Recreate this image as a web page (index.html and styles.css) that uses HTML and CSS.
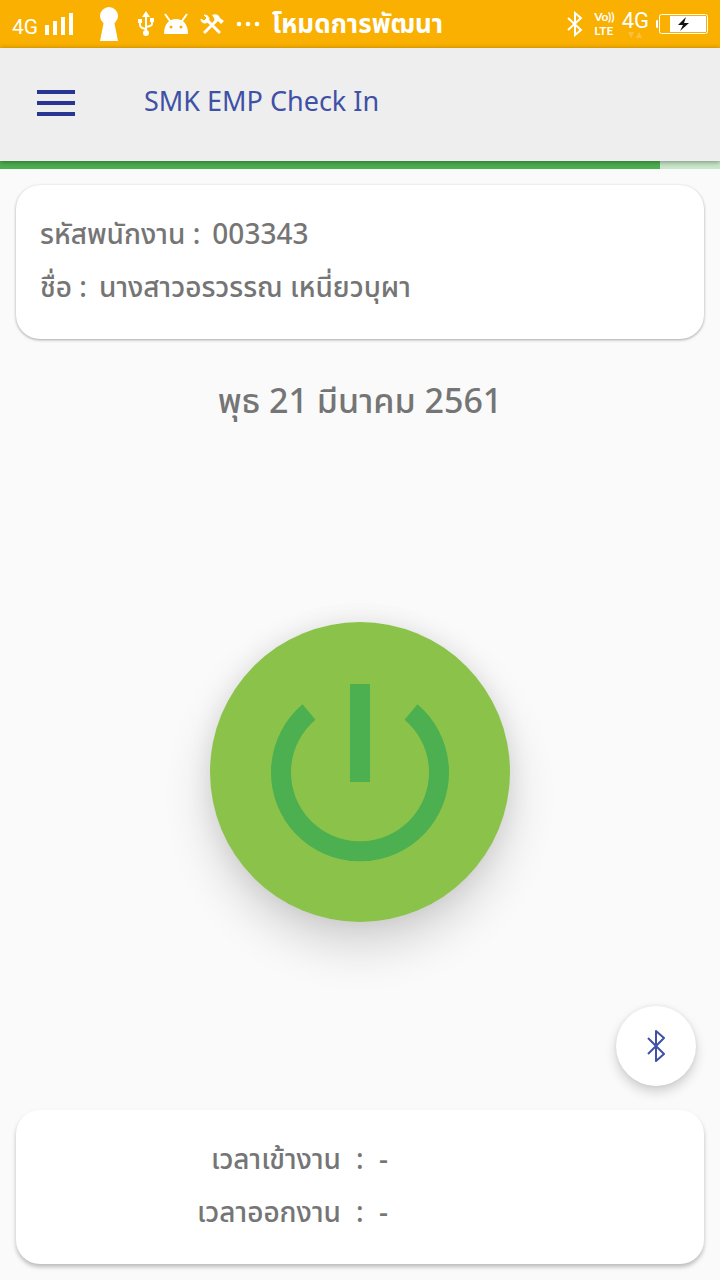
FILE: index.html
```
<!DOCTYPE html>
<html lang="th">
<head>
    <meta charset="UTF-8">
    <meta name="viewport" content="width=device-width, initial-scale=1.0">
    <title>SMK EMP Check In</title>
    <link rel="stylesheet" href="styles.css">
</head>
<body>

<div class="status-bar">
    <span class="network">4G</span>
    <svg class="signal" width="30" height="24" viewBox="0 0 30 24" fill="#fff">
        <path d="M0 13h4v10H0zM8 9h4v14H8zM16 5h4v18h-4zM24 1h4v22h-4z"/>
    </svg>
    <svg class="keyhole" width="20" height="34" viewBox="0 0 20 34" fill="#fff">
        <circle cx="10" cy="9" r="9"/>
        <path d="M5 14h10l4 20H1z"/>
    </svg>
    <svg class="usb" width="16" height="26" viewBox="0 0 16 26" fill="none" stroke="#fff" stroke-width="2">
        <path d="M8 4v18M2 10v4q0 3 6 4M14 9v4q0 2-6 3"/>
        <path d="M8 0l4 6H4zM0 8h4v4H0zM12 7h4v4h-4z" fill="#fff" stroke="none"/>
        <circle cx="8" cy="22" r="3" fill="#fff" stroke="none"/>
    </svg>
    <svg class="android" width="24" height="22" viewBox="0 0 24 22">
        <path d="M6 8L1 1M18 8l5-7" stroke="#fff" stroke-width="2"/>
        <path d="M0 21C0 11 5 6 12 6s12 5 12 15z" fill="#fff"/>
        <circle cx="7" cy="14" r="1.5" fill="#f9b000"/>
        <circle cx="17" cy="14" r="1.5" fill="#f9b000"/>
    </svg>
    <svg class="tools" width="24" height="22" viewBox="0 0 24 22" fill="none" stroke="#fff">
        <path d="M6 6l14 14" stroke-width="3"/>
        <path d="M4 2l3 3-3 3-3-2c0 4 4 5 7 3 2-3 1-7-4-7z" fill="#fff" stroke-width="1"/>
        <path d="M4 20L17 7" stroke-width="3"/>
        <path d="M12 2c4-2 7 0 8 3l4 3-3 3-3-3-3 1-1-4z" fill="#fff" stroke="none"/>
    </svg>
    <svg class="dots" width="24" height="6" viewBox="0 0 24 6" fill="#fff">
        <circle cx="3" cy="3" r="2.3"/><circle cx="12" cy="3" r="2.3"/><circle cx="21" cy="3" r="2.3"/>
    </svg>
    <span class="mode">โหมดการพัฒนา</span>

    <div class="status-right">
        <svg width="16" height="26" viewBox="0 0 16 26" fill="none" stroke="#fff" stroke-width="2">
            <path d="M1 7l13 12-6 5V2l6 5L1 19"/>
        </svg>
        <span class="volte"><span>Vo))</span><span>LTE</span></span>
        <span class="network-data">
            <span>4G</span>
            <svg width="14" height="6" viewBox="0 0 14 6" fill="#fbc040"><path d="M0 0h6L3 6zM8 6h6l-3-6z"/></svg>
        </span>
        <svg class="battery" width="52" height="22" viewBox="0 0 52 22">
            <rect x="0" y="7" width="2" height="8" rx="1" fill="#fff"/>
            <rect x="3.5" y="1.5" width="48" height="19" rx="2" fill="none" stroke="#fff"/>
            <rect x="14" y="3" width="36" height="16" fill="#fff"/>
            <path d="M30 4l-8 8h5l-3 6 9-8h-5z" fill="#111"/>
        </svg>
    </div>
</div>

<header class="toolbar">
    <button class="menu-button" type="button" aria-label="เมนู">
        <svg width="38" height="28" viewBox="0 0 38 28" fill="#283593">
            <path d="M0 1h38v4H0zM0 12h38v4H0zM0 23h38v4H0z"/>
        </svg>
    </button>
    <h1>SMK EMP Check In</h1>
</header>
<progress class="progress" value="660" max="720" aria-label="สถานะ"></progress>

<main>
    <section class="card">
        <p class="info"><span>รหัสพนักงาน :</span> <span>003343</span></p>
        <p class="info"><span>ชื่อ :</span> <span>นางสาวอรวรรณ เหนี่ยวบุผา</span></p>
    </section>

    <h2 class="date">พุธ 21 มีนาคม 2561</h2>

    <div class="action-area">
        <button class="power-button" type="button" aria-label="ลงเวลา">
            <svg width="180" height="180" viewBox="0 0 180 180" fill="none" stroke="#4caf50" stroke-width="20">
                <path d="M90 2v98"/>
                <path d="M39 30A79 79 0 1 0 141 30"/>
            </svg>
        </button>
        <button class="bluetooth-button" type="button" aria-label="บลูทูธ">
            <svg width="20" height="32" viewBox="0 0 20 32" fill="none" stroke="#3f51a5" stroke-width="2" stroke-linejoin="round">
                <path d="M2 8l16 16-8 7V1l8 7L2 24"/>
            </svg>
        </button>
    </div>

    <section class="card card-raised">
        <dl class="times">
            <dt>เวลาเข้างาน</dt>
            <dd>:</dd>
            <dd>-</dd>
            <dt>เวลาออกงาน</dt>
            <dd>:</dd>
            <dd>-</dd>
        </dl>
    </section>
</main>

</body>
</html>
```
FILE: styles.css
```
* {
    box-sizing: border-box;
}
body {
    display: flex;
    flex-direction: column;
    min-height: 100vh;
    margin: 0;
    background-color: #fafafa;
    color: #757575;
    font-family: "Noto Sans", "Noto Sans Thai", sans-serif;
}
h1, h2, p, dl, dd {
    margin: 0;
    font-weight: normal;
}
button {
    display: flex;
    align-items: center;
    justify-content: center;
    padding: 0;
    border: none;
    cursor: pointer;
}
svg {
    flex-shrink: 0;
}

/* status bar */
.status-bar {
    display: flex;
    align-items: center;
    height: 48px;
    padding: 0 12px;
    background-color: #f9b000;
    color: white;
    white-space: nowrap;
}
.network {
    padding-top: 6px;
    font: 21px Roboto, sans-serif;
}
.signal {
    margin-left: 7px;
}
.keyhole {
    margin-left: 24px;
}
.usb {
    margin-left: 19px;
}
.android {
    margin-left: 10px;
}
.tools {
    margin-left: 12px;
}
.dots {
    margin-left: 12px;
}
.mode {
    margin-left: 12px;
    padding-top: 2px;
    font-size: 26px;
    font-weight: bold;
}
.status-right {
    display: flex;
    align-items: center;
    gap: 7px;
    margin-left: auto;
}
.volte {
    display: flex;
    flex-direction: column;
    margin-left: 4px;
    font: bold 12px/14px Lato, sans-serif;
}
.network-data {
    display: flex;
    flex-direction: column;
    align-items: center;
    font: 22px/22px Roboto, sans-serif;
}

/* toolbar */
.toolbar {
    position: relative;
    display: flex;
    align-items: center;
    gap: 50px;
    height: 113px;
    padding: 0 18px 4px;
    background-color: #eeeeee;
    box-shadow: 0 1px 5px rgba(0, 0, 0, 0.4);
}
.menu-button {
    width: 76px;
    height: 76px;
    background: none;
}
.toolbar h1 {
    padding-bottom: 4px;
    color: #3f51a5;
    font-size: 27px;
}
.progress {
    display: block;
    width: 100%;
    height: 8px;
    border: none;
    background-color: #c8e6c9;
    appearance: none;
}
.progress::-webkit-progress-bar {
    background-color: #c8e6c9;
}
.progress::-webkit-progress-value {
    background-color: #4caf50;
}

/* content */
main {
    display: flex;
    flex: 1;
    flex-direction: column;
    padding: 16px;
}
.card {
    padding: 22px 24px 26px;
    border-radius: 24px;
    background-color: white;
    box-shadow: 0 1px 3px rgba(0, 0, 0, 0.35);
    font-size: 28px;
    line-height: 53px;
}
.card p, .card dl, .card dd, .date {
    font-weight: 500;
}
.card-raised {
    box-shadow: 0 3px 4px rgba(0, 0, 0, 0.25);
}
.info {
    display: flex;
    gap: 12px;
}
.date {
    padding: 34px 0 30px;
    font-size: 34px;
    line-height: 54px;
    text-align: center;
}
.action-area {
    position: relative;
    display: flex;
    flex: 1;
    align-items: center;
    justify-content: center;
    margin-bottom: 24px;
}
.power-button {
    width: 300px;
    height: 300px;
    border-radius: 50%;
    background-color: #8bc34a;
    box-shadow: 0 24px 48px rgba(0, 0, 0, 0.16), 0 0 24px rgba(0, 0, 0, 0.08);
}
/* floating over the bottom corner */
.bluetooth-button {
    position: absolute;
    right: 8px;
    bottom: 0;
    width: 80px;
    height: 80px;
    border-radius: 50%;
    background-color: white;
    box-shadow: 0 6px 12px rgba(0, 0, 0, 0.17), 0 0 4px rgba(0, 0, 0, 0.08);
}
.times {
    display: grid;
    grid-template-columns: 301px 8px 1fr;
    column-gap: 15px;
}
.times dt {
    text-align: right;
}
```
